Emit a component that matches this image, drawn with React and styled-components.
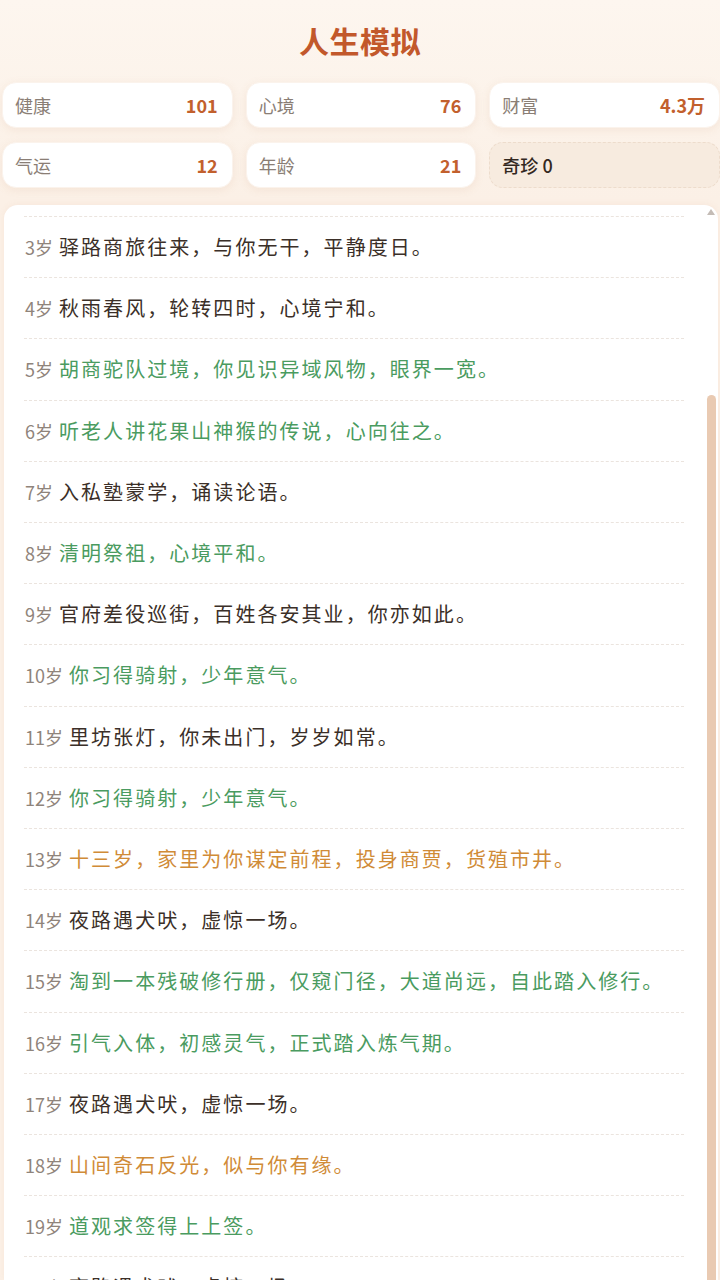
import React from "react";
import styled, { createGlobalStyle } from "styled-components";

const GlobalStyle = createGlobalStyle`
  html, body {
    margin: 0;
    padding: 0;
    background: #fcf4ec;
  }
  body {
    font-family: "Noto Sans CJK SC", "Noto Sans", sans-serif;
    color: #3b2f28;
  }
  * { box-sizing: border-box; }
`;

const Page = styled.div`
  height: 100vh;
  overflow: hidden;
  display: flex;
  flex-direction: column;
  background: linear-gradient(180deg, #fdf6ef 0%, #fbf0e6 200px, #fbf0e6 100%);
`;

const Title = styled.h1`
  margin: 20px 0 0;
  font-size: 30px;
  line-height: 40px;
  font-weight: 700;
  text-align: center;
  color: #c2582b;
  letter-spacing: 0.5px;
`;

const StatGrid = styled.div`
  margin-top: 22px;
  padding-left: 2px;
  display: grid;
  grid-template-columns: repeat(3, 1fr);
  grid-auto-rows: 46px;
  column-gap: 13px;
  row-gap: 14px;
`;

const StatCard = styled.div`
  display: flex;
  align-items: center;
  justify-content: space-between;
  padding: 0 14px 0 12px;
  border-radius: 14px;
  background: ${(p) => (p.$muted ? "#f7ebdf" : "#ffffff")};
  border: ${(p) => (p.$muted ? "1px dashed #eddccc" : "1px solid #fbf3ec")};
  box-shadow: ${(p) => (p.$muted ? "none" : "0 2px 8px rgba(200, 140, 100, 0.12)")};
`;

const StatLabel = styled.span`
  font-size: 18px;
  color: ${(p) => (p.$dark ? "#33281f" : "#8a7e75")};
  font-weight: ${(p) => (p.$dark ? 500 : 400)};
`;

const StatValue = styled.span`
  font-size: 18px;
  font-weight: 700;
  color: #c2602d;
`;

const LogPanel = styled.div`
  position: relative;
  flex: 1;
  min-height: 0;
  overflow: hidden;
  margin: 17px 2px 0 4px;
  background: #ffffff;
  border-radius: 14px 14px 0 0;
  box-shadow: 0 -1px 6px rgba(200, 140, 100, 0.08);
  padding: 11px 34px 0 20px;
`;

const LogList = styled.div`
  border-top: 1px dashed #ebe4de;
`;

const LogRow = styled.div`
  display: flex;
  align-items: baseline;
  padding: 19px 0 19px 1px;
  line-height: 22.2px;
  border-bottom: 1px dashed #ebe4de;
  white-space: nowrap;
`;

const Age = styled.span`
  flex-shrink: 0;
  font-size: 18px;
  color: #8f847b;
  margin-right: 6px;
`;

const toneColor = {
  normal: "#3b2f28",
  good: "#4a9b60",
  fate: "#d08b37",
};

const LogText = styled.span`
  font-size: 20px;
  letter-spacing: 2.05px;
  color: ${(p) => toneColor[p.$tone]};
`;

const ScrollTrack = styled.div`
  position: absolute;
  top: 0;
  right: 2px;
  bottom: 0;
  width: 10px;
  display: flex;
  flex-direction: column;
  align-items: center;
`;

const ScrollArrow = styled.svg`
  flex-shrink: 0;
  margin-top: 4px;
`;

const ScrollThumb = styled.div`
  margin-top: 180px;
  flex: 1;
  width: 9px;
  border-radius: 5px 5px 0 0;
  background: #e9cab2;
`;

const stats = [
  { label: "健康", value: "101" },
  { label: "心境", value: "76" },
  { label: "财富", value: "4.3万" },
  { label: "气运", value: "12" },
  { label: "年龄", value: "21" },
];

const events = [
  [3, "驿路商旅往来，与你无干，平静度日。", "normal"],
  [4, "秋雨春风，轮转四时，心境宁和。", "normal"],
  [5, "胡商驼队过境，你见识异域风物，眼界一宽。", "good"],
  [6, "听老人讲花果山神猴的传说，心向往之。", "good"],
  [7, "入私塾蒙学，诵读论语。", "normal"],
  [8, "清明祭祖，心境平和。", "good"],
  [9, "官府差役巡街，百姓各安其业，你亦如此。", "normal"],
  [10, "你习得骑射，少年意气。", "good"],
  [11, "里坊张灯，你未出门，岁岁如常。", "normal"],
  [12, "你习得骑射，少年意气。", "good"],
  [13, "十三岁，家里为你谋定前程，投身商贾，货殖市井。", "fate"],
  [14, "夜路遇犬吠，虚惊一场。", "normal"],
  [15, "淘到一本残破修行册，仅窥门径，大道尚远，自此踏入修行。", "good"],
  [16, "引气入体，初感灵气，正式踏入炼气期。", "good"],
  [17, "夜路遇犬吠，虚惊一场。", "normal"],
  [18, "山间奇石反光，似与你有缘。", "fate"],
  [19, "道观求签得上上签。", "good"],
  [20, "夜路遇犬吠，虚惊一场。", "normal"],
];

export default function App() {
  return (
    <>
      <GlobalStyle />
      <Page>
        <Title>人生模拟</Title>
        <StatGrid>
          {stats.map((s) => (
            <StatCard key={s.label}>
              <StatLabel>{s.label}</StatLabel>
              <StatValue>{s.value}</StatValue>
            </StatCard>
          ))}
          <StatCard $muted>
            <StatLabel $dark>奇珍 0</StatLabel>
          </StatCard>
        </StatGrid>
        <LogPanel>
          <LogList>
            {events.map(([age, text, tone]) => (
              <LogRow key={age}>
                <Age>{age}岁</Age>
                <LogText $tone={tone}>{text}</LogText>
              </LogRow>
            ))}
          </LogList>
          <ScrollTrack>
            <ScrollArrow width="8" height="6" viewBox="0 0 8 6">
              <polygon points="0,6 4,0 8,6" fill="#c4bcb6" />
            </ScrollArrow>
            <ScrollThumb />
          </ScrollTrack>
        </LogPanel>
      </Page>
    </>
  );
}
